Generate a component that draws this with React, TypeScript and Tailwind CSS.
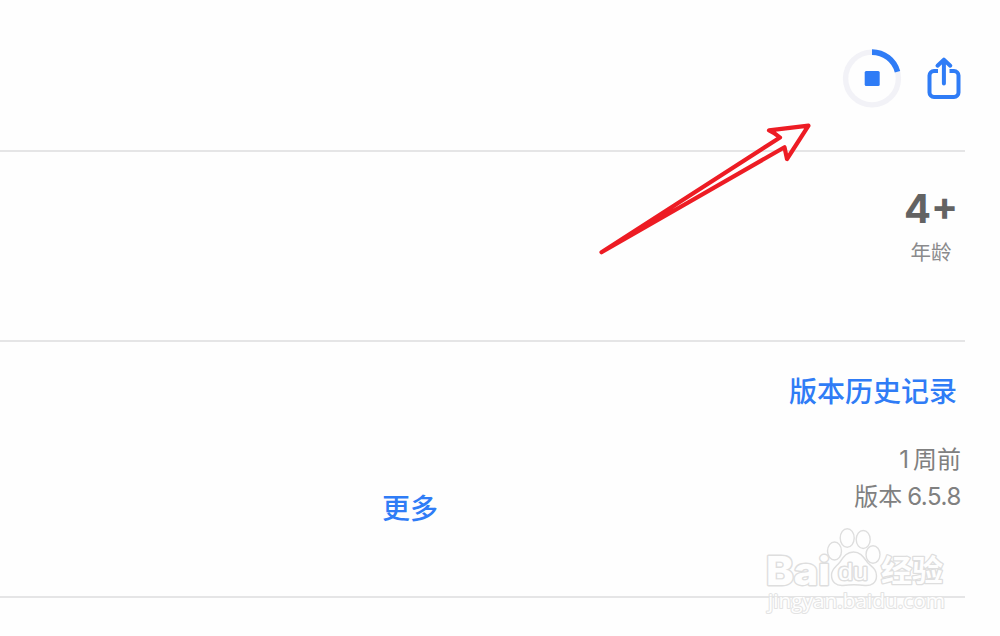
import type { ReactNode } from "react";

interface SectionProps {
  className: string;
  children: ReactNode;
}

function Section({ className, children }: SectionProps) {
  return (
    <section className={`mr-[35px] border-b-2 border-[#e5e5e6] ${className}`}>
      {children}
    </section>
  );
}

function DownloadProgress() {
  return (
    <button aria-label="停止下载">
      <svg width="60" height="60" viewBox="0 0 60 60" fill="none">
        <circle cx="30" cy="30.500" r="26.4" stroke="#f2f2f7" strokeWidth="5.4" />
        <path d="M30 4.100A26.4 26.4 0 0 1 55.500 23.700" stroke="#2f7cf6" strokeWidth="5.6" />
        <rect x="22.700" y="23" width="15" height="15" rx="1.5" fill="#2f7cf6" />
      </svg>
    </button>
  );
}

function ShareButton() {
  return (
    <button aria-label="共享">
      <svg width="36" height="44" viewBox="0 0 36 44" fill="none" stroke="#2f7cf6" strokeWidth="4">
        <path d="M13 15H9a4.500 4.500 0 0 0-4.500 4.500V36.500a4.500 4.500 0 0 0 4.500 4.500H29a4.500 4.500 0 0 0 4.500-4.500V19.500a4.500 4.500 0 0 0-4.500-4.500H24.500" />
        <path d="M18.900 27.500V4M12.500 9.700L18.900 3.700L25.300 9.700" strokeLinecap="round" strokeLinejoin="round" />
      </svg>
    </button>
  );
}

function Arrow() {
  return (
    <svg
      className="pointer-events-none absolute left-[590px] top-[110px]"
      width="230"
      height="150"
      fill="none"
      stroke="#ed1c24"
      strokeWidth="4.200"
      strokeLinejoin="round"
    >
      <path d="M11.500 142.300L190 27.500Q184 22.500 179 20.300L218.500 15.700L197 49L194.500 37.200Z" />
      <path d="M11.500 142.300L80 98.300V101.500Z" fill="#ed1c24" strokeWidth="1.500" />
    </svg>
  );
}

function Watermark() {
  return (
    <svg
      className="pointer-events-none absolute left-[760px] top-[520px]"
      width="200"
      height="100"
      fill="#fefefe"
      stroke="#dedede"
      strokeWidth="1.4"
      strokeLinejoin="round"
    >
      <text x="6" y="64.500" fontSize="39" fontFamily="Inter, sans-serif" fontWeight="800" strokeWidth="2.800" paintOrder="stroke" textLength="64" lengthAdjust="spacingAndGlyphs">
        Bai
      </text>
      <ellipse cx="74.500" cy="31" rx="7" ry="9" />
      <ellipse cx="87.200" cy="18" rx="7" ry="9.300" />
      <ellipse cx="103.200" cy="19.500" rx="7" ry="9" />
      <ellipse cx="113" cy="34.500" rx="7" ry="8.800" />
      <path d="M93.500 32C101 32 104 38 108 43C112 47 116.500 49 116.500 56C116.500 63 111 66 105 65.500C97 64.500 91 64.500 83 65.500C76 66 71.500 62 71.500 55C71.500 49 76 47 80 42C84 36 87 32 93.500 32Z" />
      <text x="78" y="60" fontSize="24" fontFamily="'Liberation Sans', sans-serif" strokeWidth="2.800" paintOrder="stroke" textLength="30" lengthAdjust="spacingAndGlyphs">
        du
      </text>
      <text x="121" y="61" fontSize="30" fontFamily="'Noto Sans CJK SC', sans-serif" fontWeight="700" strokeWidth="2.600" paintOrder="stroke" textLength="62" lengthAdjust="spacingAndGlyphs">
        经验
      </text>
      <text
        x="8"
        y="87.500"
        fontSize="20"
        fontFamily="'Open Sans', sans-serif"
        strokeWidth="2"
        stroke="#e3e3e3"
        paintOrder="stroke"
        textLength="177"
        lengthAdjust="spacingAndGlyphs"
      >
        jingyan.baidu.com
      </text>
    </svg>
  );
}

export default function App() {
  return (
    <main className="relative h-[636px] w-[1000px] overflow-hidden bg-[#fefefe] font-[Inter,'Noto_Sans_CJK_SC',sans-serif]">
      {/* Toolbar */}
      <Section className="flex h-[152px] items-start justify-end gap-[23px] pr-1 pt-12">
        <DownloadProgress />
        <div className="pt-2">
          <ShareButton />
        </div>
      </Section>

      {/* Age rating */}
      <Section className="flex h-[190px] justify-end pr-2 pt-[37px]">
        <div className="flex w-[52px] flex-col items-center">
          <span className="text-[40px] leading-10 font-bold text-[#636363]">4+</span>
          <span className="mt-2.5 text-[20.5px] leading-7 text-[#8a8a8c]">年龄</span>
        </div>
      </Section>

      {/* Version info */}
      <Section className="flex h-64 justify-between pl-[382px]">
        <button className="mt-[147px] h-10 text-[28px] leading-10 font-medium text-[#2f7cf6]">更多</button>
        <div className="flex flex-col items-end pr-1 pt-[30px] text-[#808080]">
          <button className="mr-1 text-[28px] leading-10 font-medium text-[#2f7cf6]">版本历史记录</button>
          <div className="mt-[30px] flex gap-1 text-[24px] leading-9">
            <span>1</span>
            <span>周前</span>
          </div>
          <div className="flex gap-[5px] text-[24px] leading-[37px]">
            <span>版本</span>
            <span className="tracking-[-0.4px]">6.5.8</span>
          </div>
        </div>
      </Section>

      <Arrow />
      <Watermark />
    </main>
  );
}
